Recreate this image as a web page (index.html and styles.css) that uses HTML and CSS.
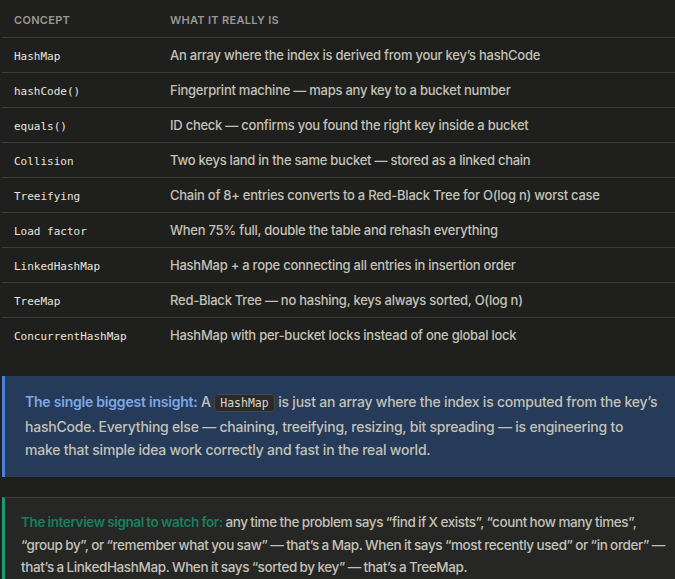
FILE: index.html
```html
<!DOCTYPE html>
<html lang="en">
<head>
  <meta charset="UTF-8" />
  <meta name="viewport" content="width=device-width, initial-scale=1.0"/>
  <title>HashMap cheat sheet</title>
  <link rel="stylesheet" href="styles.css">
</head>
<body>
  <div class="page">
    <table class="concepts">
      <thead>
        <tr>
          <th>Concept</th>
          <th>What it really is</th>
        </tr>
      </thead>
      <tbody>
        <tr><td><code>HashMap</code></td><td>An array where the index is derived from your key’s hashCode</td></tr>
        <tr><td><code>hashCode()</code></td><td>Fingerprint machine — maps any key to a bucket number</td></tr>
        <tr><td><code>equals()</code></td><td>ID check — confirms you found the right key inside a bucket</td></tr>
        <tr><td><code>Collision</code></td><td>Two keys land in the same bucket — stored as a linked chain</td></tr>
        <tr><td><code>Treeifying</code></td><td>Chain of 8+ entries converts to a Red-Black Tree for O(log n) worst case</td></tr>
        <tr><td><code>Load factor</code></td><td>When 75% full, double the table and rehash everything</td></tr>
        <tr><td><code>LinkedHashMap</code></td><td>HashMap + a rope connecting all entries in insertion order</td></tr>
        <tr><td><code>TreeMap</code></td><td>Red-Black Tree — no hashing, keys always sorted, O(log n)</td></tr>
        <tr><td><code>ConcurrentHashMap</code></td><td>HashMap with per-bucket locks instead of one global lock</td></tr>
      </tbody>
    </table>

    <div class="callout insight">
      <p><span class="label">The single biggest insight:</span> A <code class="pill">HashMap</code> is just an array where the index is computed from the key’s hashCode. Everything else — chaining, treeifying, resizing, bit spreading — is engineering to make that simple idea work correctly and fast in the real world.</p>
    </div>

    <div class="callout signal">
      <p><span class="label">The interview signal to watch for:</span> any time the problem says “find if X exists”, “count how many times”, “group by”, or “remember what you saw” — that’s a Map. When it says “most recently used” or “in order” — that’s a LinkedHashMap. When it says “sorted by key” — that’s a TreeMap.</p>
    </div>
  </div>
</body>
</html>
```

FILE: styles.css
```css
body {
  margin: 0;
  background: #1f1f1e;
  font-family: Inter, 'Noto Sans', sans-serif;
  color: #c3c2b7;
}

.page {
  padding: 0 0 0 2px;
}

table.concepts {
  width: 100%;
  border-collapse: collapse;
  font-size: 13px;
  font-weight: 500;
  letter-spacing: -0.25px;
}

th {
  text-align: left;
  font-size: 11px;
  font-weight: 600;
  letter-spacing: 0.3px;
  text-transform: uppercase;
  color: #9a9993;
  padding: 13px 12px 10px;
  border-bottom: 1px solid #3b3b39;
}

th:first-child,
td:first-child {
  width: 132px;
}

td {
  height: 34px;
  padding: 0 12px;
  border-bottom: 1px solid #3b3b39;
}

tbody tr:last-child td {
  border-bottom: none;
}

code {
  font-family: 'DejaVu Sans Mono', monospace;
  font-size: 11px;
  font-weight: 400;
  letter-spacing: 0;
  color: #e6e5de;
}

.callout {
  border-left: 3px solid #4c7fd6;
  font-weight: 500;
}

.callout p {
  margin: 0;
}

.insight {
  margin-top: 24px;
  padding: 14px 14px 16px 20px;
  font-size: 14px;
  letter-spacing: -0.22px;
  line-height: 23px;
  background: #263a59;
}

.insight .label {
  color: #7ea8e4;
  font-weight: 600;
}

.pill {
  font-size: 11.5px;
  background: #2a2a29;
  border: 1px solid #474745;
  border-radius: 4px;
  padding: 1px 5px;
  color: #d8d7d0;
}

.signal {
  margin-top: 20px;
  padding: 13px 5px 16px 16px;
  font-size: 13.5px;
  letter-spacing: -0.38px;
  word-spacing: -0.5px;
  line-height: 22.5px;
  background: #262625;
  border-left-color: #1f9a74;
  border-top: 1px solid #3c3c3a;
}

.signal .label {
  color: #1b7e5f;
  font-weight: 600;
}
```
